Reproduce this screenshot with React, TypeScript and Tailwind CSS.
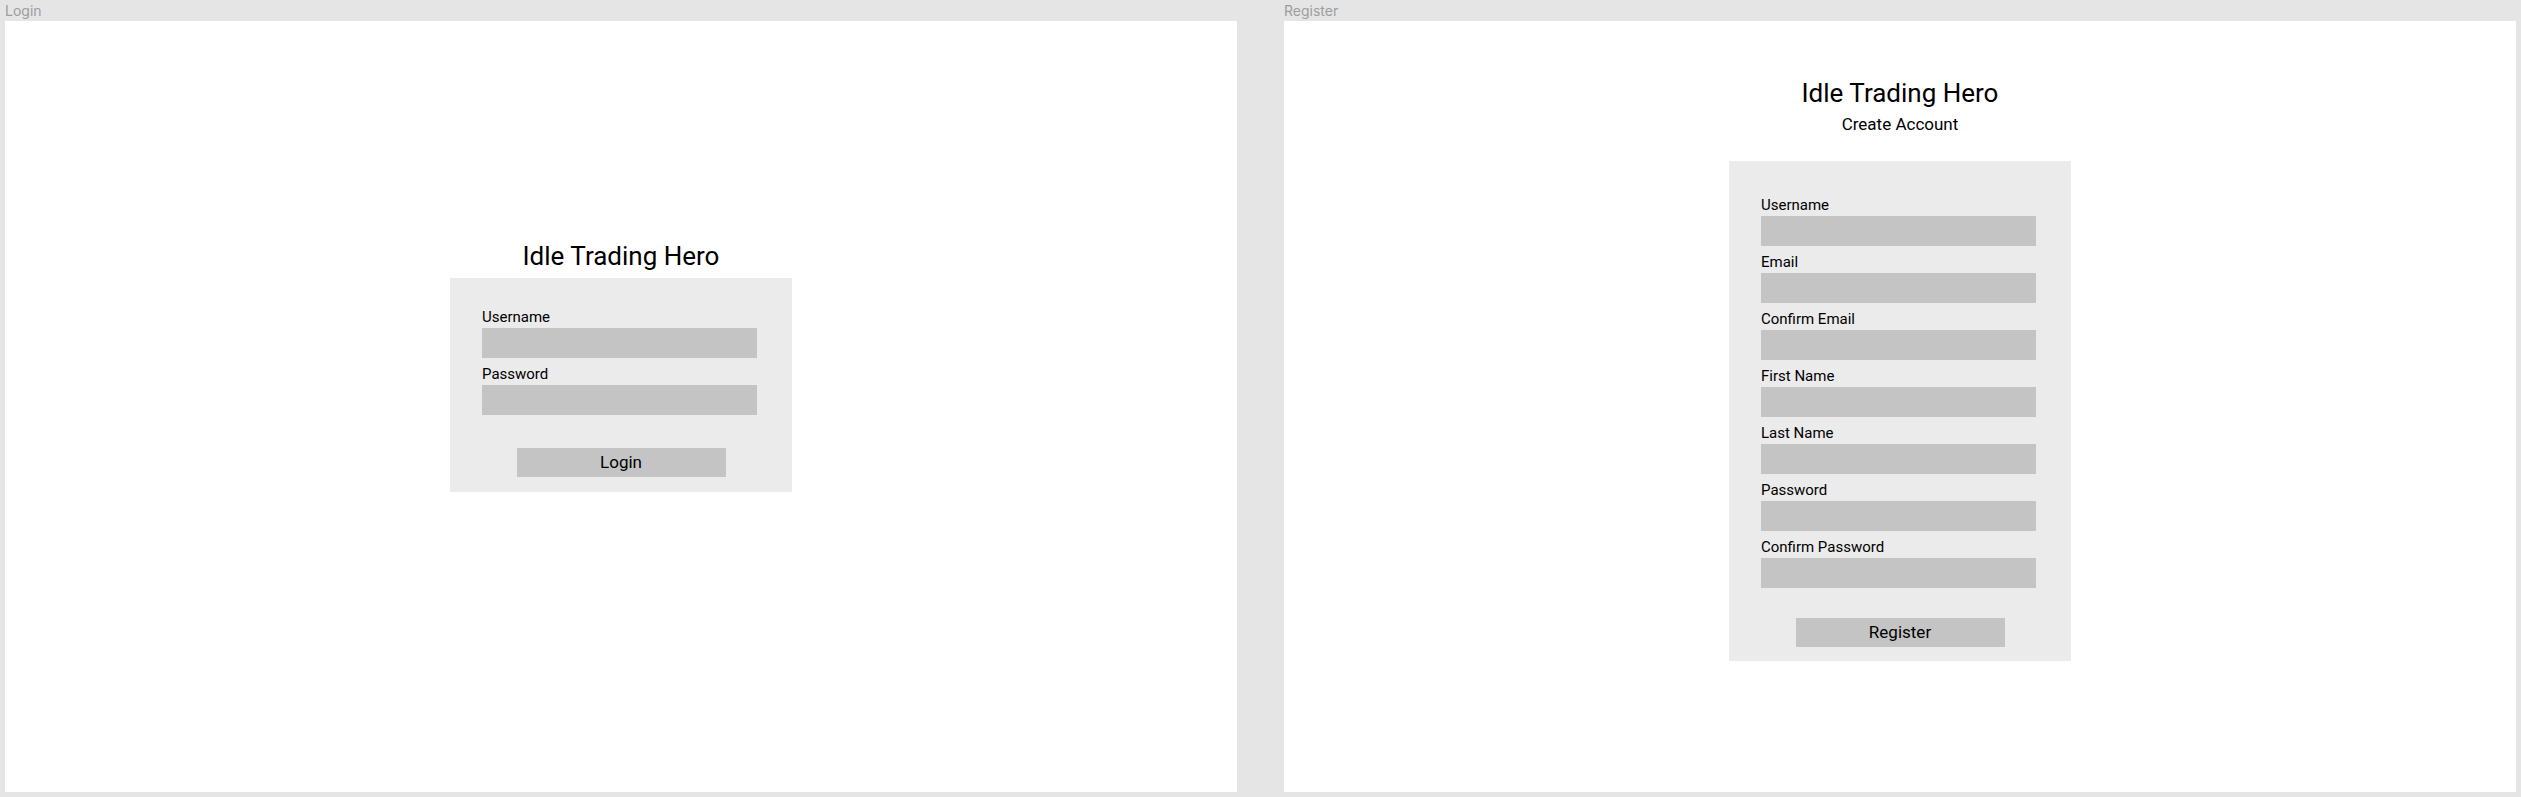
import { useId } from "react";
import type { ReactNode } from "react";

function Artboard({ name, children }: { name: string; children: ReactNode }) {
  return (
    <section className="flex flex-1 flex-col">
      <h2 className="h-[21px] font-[Inter,sans-serif] text-[14px] leading-[22px] text-[#9d9d9d]">{name}</h2>
      <div className="flex flex-1 flex-col items-center bg-white">{children}</div>
    </section>
  );
}

function Field({ label, type = "text" }: { label: string; type?: string }) {
  const id = useId();
  return (
    <div className="flex flex-col gap-[2px]">
      <label htmlFor={id} className="text-[15px] leading-[18px]">
        {label}
      </label>
      <input id={id} type={type} className="h-[30px] w-full bg-[#c4c4c4] px-2 text-[15px] outline-none" />
    </div>
  );
}

function SubmitButton({ children }: { children: ReactNode }) {
  return (
    <button type="submit" className="h-[29px] w-[209px] self-center bg-[#c4c4c4] pb-[2px] text-[17px] leading-[20px]">
      {children}
    </button>
  );
}

function Title() {
  return <h1 className="text-[26px] leading-8">Idle Trading Hero</h1>;
}

export default function App() {
  return (
    <main className="flex min-h-screen gap-[47px] bg-[#e5e5e5] pr-[5px] pb-[5px] pl-[5px] font-[Roboto,sans-serif] text-black">
      <Artboard name="Login">
        <div className="mt-[219px] mb-[6px]">
          <Title />
        </div>
        <form className="flex w-full max-w-[342px] flex-col bg-[#ebebeb] pt-[30px] pb-[15px]">
          <div className="mb-[33px] flex flex-col gap-[7px] pr-[35px] pl-8">
            <Field label="Username" />
            <Field label="Password" type="password" />
          </div>
          <SubmitButton>Login</SubmitButton>
        </form>
      </Artboard>
      <Artboard name="Register">
        <div className="mt-14 mb-[27px] flex flex-col items-center gap-[5px]">
          <Title />
          <p className="text-[17px] leading-[20px]">Create Account</p>
        </div>
        <form className="flex w-full max-w-[342px] flex-col bg-[#ebebeb] pt-[35px] pb-[14px]">
          <div className="mb-[30px] flex flex-col gap-[7px] pr-[35px] pl-8">
            <Field label="Username" />
            <Field label="Email" type="email" />
            <Field label="Confirm Email" type="email" />
            <Field label="First Name" />
            <Field label="Last Name" />
            <Field label="Password" type="password" />
            <Field label="Confirm Password" type="password" />
          </div>
          <SubmitButton>Register</SubmitButton>
        </form>
      </Artboard>
    </main>
  );
}
